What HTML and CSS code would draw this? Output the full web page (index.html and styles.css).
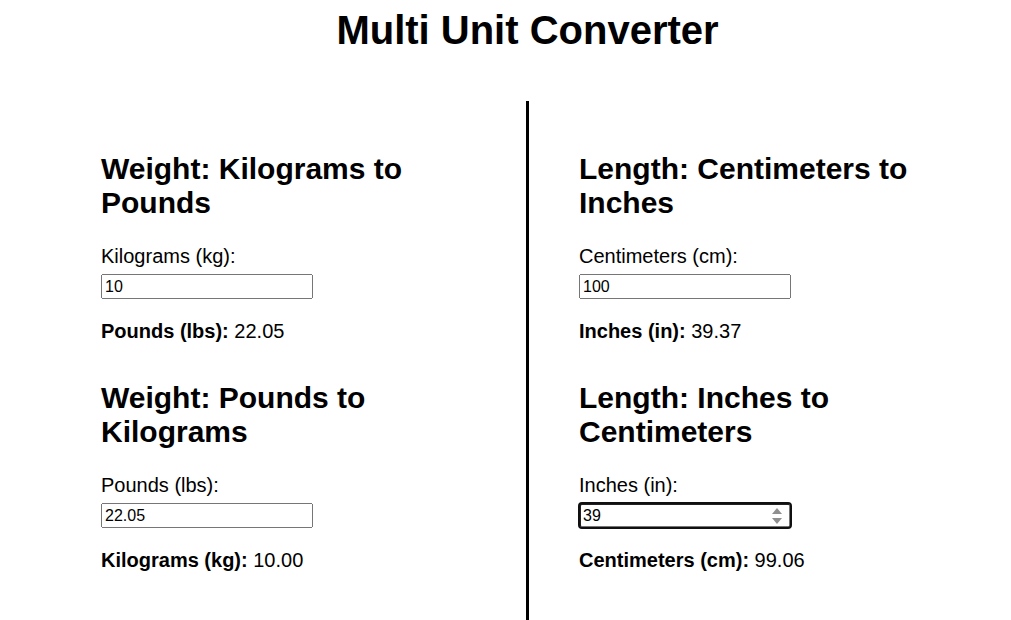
FILE: index.html
```html
<!DOCTYPE html>
<html lang="en">
<head>
<meta charset="utf-8">
<title>Multi Unit Converter</title>
<link rel="stylesheet" href="styles.css">
</head>
<body>
<h1 class="title">Multi Unit Converter</h1>
<div class="container">
  <div class="col col-left">
    <section class="converter">
      <h2 class="conv-title">Weight: Kilograms to Pounds</h2>
      <label class="conv-label" for="kg">Kilograms (kg):</label>
      <div class="input-wrap"><input class="conv-input" id="kg" type="number" value="10"></div>
      <p class="conv-result"><strong>Pounds (lbs):</strong> 22.05</p>
    </section>
    <section class="converter">
      <h2 class="conv-title">Weight: Pounds to Kilograms</h2>
      <label class="conv-label" for="lbs">Pounds (lbs):</label>
      <div class="input-wrap"><input class="conv-input" id="lbs" type="number" value="22.05"></div>
      <p class="conv-result"><strong>Kilograms (kg):</strong> 10.00</p>
    </section>
  </div>
  <div class="divider"></div>
  <div class="col col-right">
    <section class="converter">
      <h2 class="conv-title">Length: Centimeters to Inches</h2>
      <label class="conv-label" for="cm">Centimeters (cm):</label>
      <div class="input-wrap"><input class="conv-input" id="cm" type="number" value="100"></div>
      <p class="conv-result"><strong>Inches (in):</strong> 39.37</p>
    </section>
    <section class="converter">
      <h2 class="conv-title">Length: Inches to Centimeters</h2>
      <label class="conv-label" for="in">Inches (in):</label>
      <div class="input-wrap">
        <input class="conv-input is-active" id="in" type="number" value="39" autofocus>
        <svg class="spinner" width="12" height="20" viewBox="0 0 12 20" aria-hidden="true">
          <path d="M6 2 L11 8 L1 8 Z" fill="#8f8f8f"/>
          <path d="M1 12 L11 12 L6 18 Z" fill="#8f8f8f"/>
        </svg>
      </div>
      <p class="conv-result"><strong>Centimeters (cm):</strong> 99.06</p>
    </section>
  </div>
</div>
</body>
</html>
```
FILE: styles.css
```css
html, body {
  background: #fff;
  color: #000;
}
body {
  margin: 8px;
  font-family: "Liberation Sans", Arial, sans-serif;
  font-size: 20px;
  overflow: hidden;
}
.title {
  margin: 0;
  padding-left: 44px;
  font-size: 40px;
  font-weight: bold;
  text-align: center;
}
.container {
  display: flex;
  margin-top: 48px;
  padding-left: 93px;
}
.col {
  width: 380px;
  padding-top: 51px;
  padding-bottom: 60px;
}
.col-left {
  margin-right: 45px;
}
.col-right {
  margin-left: 50px;
}
.divider {
  width: 3px;
  background: #000;
  flex-shrink: 0;
}
.converter + .converter {
  margin-top: 38px;
}
.conv-title {
  margin: 0;
  font-size: 30px;
  font-weight: bold;
}
.conv-label {
  display: block;
  margin-top: 25px;
}
.input-wrap {
  position: relative;
  width: 212px;
  margin-top: 6px;
}
.conv-input {
  display: block;
  box-sizing: border-box;
  width: 212px;
  height: 25px;
  font-family: "Liberation Sans", Arial, sans-serif;
  font-size: 16px;
  padding: 1px 2px;
}
.conv-input::-webkit-inner-spin-button,
.conv-input::-webkit-outer-spin-button {
  -webkit-appearance: none;
  appearance: none;
  margin: 0;
}
.conv-input.is-active {
  outline: 2px solid #101010;
  outline-offset: -1px;
  border-radius: 3px;
}
.spinner {
  position: absolute;
  right: 8px;
  top: 3px;
}
.conv-result {
  margin: 21px 0 0;
}
```
